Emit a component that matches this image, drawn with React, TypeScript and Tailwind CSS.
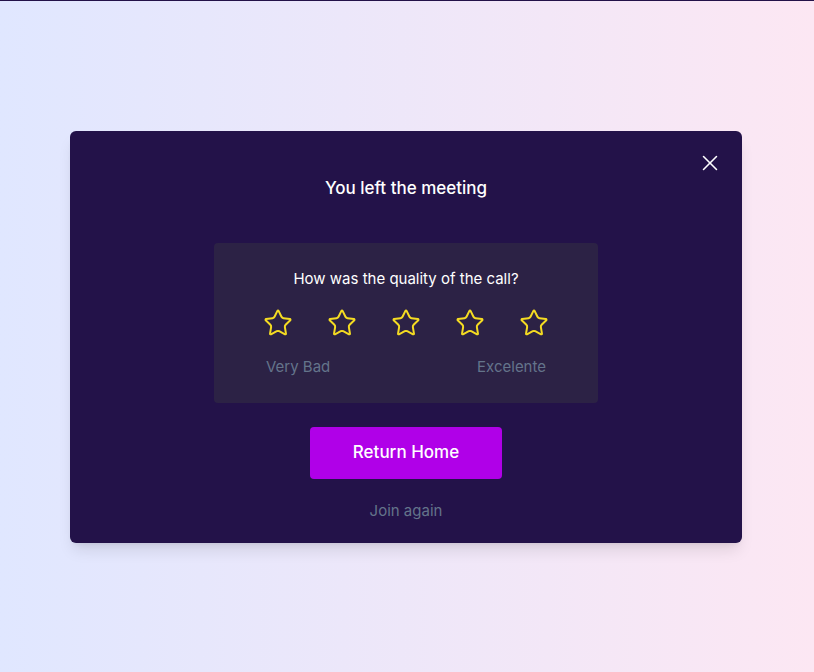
import { X, Star } from "lucide-react";

export default function App() {
  return (
    <div
      className="flex min-h-[672px] flex-col bg-gradient-to-r from-[#e0e7ff] to-[#fce7f3]"
      style={{ fontFamily: "Inter, 'Noto Sans', sans-serif" }}
    >
      <div className="h-px bg-[#231249]" />
      <div className="flex flex-1 items-center justify-center">
        {/* Modal */}
        <div className="relative mr-[2px] flex w-[672px] flex-col items-center rounded-md bg-[#231249] pt-[45px] pb-[20px] shadow-lg">
          <button className="absolute top-[19px] right-[19px] text-white">
            <X size={26} strokeWidth={1.4} />
          </button>
          <h2 className="text-[17px] leading-6 font-medium text-white">You left the meeting</h2>

          {/* Rating */}
          <div className="mt-[43px] flex w-[384px] flex-col items-center rounded bg-[#2c2245] pt-[24px] pb-[24px]">
            <p className="text-[15px] leading-6 text-white">How was the quality of the call?</p>
            <div className="mt-[17px] flex w-[286px] justify-between">
              {[1, 2, 3, 4, 5].map((n) => (
                <Star key={n} size={30} strokeWidth={1.6} className="text-[#f5dc22]" />
              ))}
            </div>
            <div className="mt-[17px] flex w-[280px] justify-between text-[15px] leading-6 text-[#64748b]">
              <span>Very Bad</span>
              <span>Excelente</span>
            </div>
          </div>

          <button className="mt-[24px] h-[52px] w-48 rounded bg-[#b000e8] text-[17px] font-medium text-white">
            Return Home
          </button>
          <button className="mt-[20px] text-[15px] leading-6 text-[#64748b]">Join again</button>
        </div>
      </div>
    </div>
  );
}
